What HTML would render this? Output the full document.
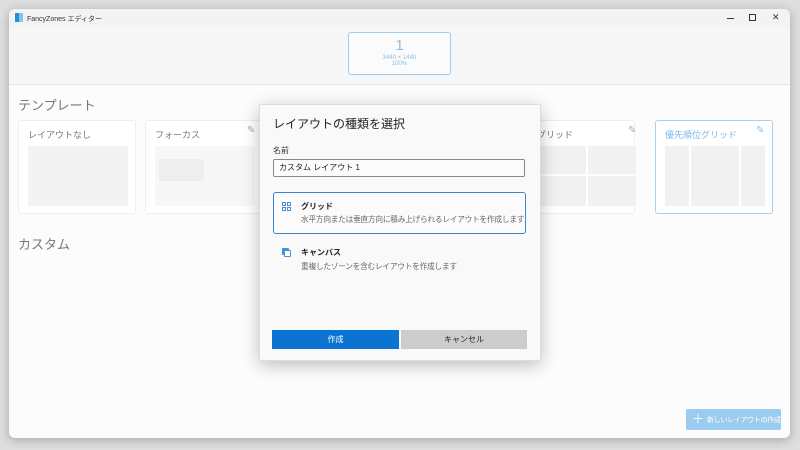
<!DOCTYPE html>
<html><head><meta charset="utf-8"><style>
*{box-sizing:border-box;margin:0;padding:0}
body{width:800px;height:450px;background:#dedede;position:relative;overflow:hidden;font-family:"Liberation Sans","Noto Sans CJK JP",sans-serif;}
.win{position:absolute;left:9px;top:9px;width:781px;height:429px;background:#fcfcfc;border-radius:6px;box-shadow:0 2px 10px rgba(0,0,0,.25);overflow:hidden}
.title{position:absolute;left:0;top:0;width:100%;height:18px;background:#f3f3f3;font-size:7px;color:#333}
.hdr{position:absolute;left:0;top:18px;width:100%;height:58px;background:#f7f7f7;border-bottom:1px solid #e8e8e8}
.mon{position:absolute;left:339px;top:5px;width:103px;height:43px;border:1.5px solid #9fcbef;border-radius:3px;background:#fbfbfb;text-align:center;color:#8cbfe9}
.abs{position:absolute;white-space:nowrap}
.card{position:absolute;top:111px;height:94px;background:#fff;border:1px solid #eee;border-radius:3px}
.ct{position:absolute;left:9px;top:7px;font-size:9px;color:#777}
.g{position:absolute;background:#f1f1f1}
.dlg{position:absolute;left:259px;top:104px;width:282px;height:257px;background:#f9f9f9;border:1px solid #ddd;box-shadow:0 4px 16px rgba(0,0,0,.25)}
.btn{position:absolute;top:225px;height:19px;font-size:8px;text-align:center;line-height:19px}
</style></head><body>
<div class="win">
 <div class="title">
  <div class="abs" style="left:6px;top:4px;width:4px;height:9px;background:#2a8fd9"></div>
  <div class="abs" style="left:10px;top:4px;width:4px;height:9px;background:#7cc6f0"></div>
  <div class="abs" style="left:18px;top:5px;">FancyZones エディター</div>
  <div class="abs" style="left:718px;top:9px;width:7px;height:1px;background:#333"></div>
  <div class="abs" style="left:740px;top:5px;width:7px;height:7px;border:1px solid #333"></div>
  <div class="abs" style="left:763px;top:3px;font-size:9px;">✕</div>
 </div>
 <div class="hdr">
  <div class="mon"><div style="font-size:15px;margin-top:4px">1</div><div style="font-size:6px;margin-top:1px">3440 × 1440</div><div style="font-size:6px">100%</div></div>
 </div>
 <div class="abs" style="left:9px;top:86px;font-size:13px;color:#777">テンプレート</div>
 <div class="card" style="left:9px;width:118px"><div class="ct">レイアウトなし</div><div class="g" style="left:9px;top:25px;width:100px;height:60px;background:#f3f3f3"></div></div>
 <div class="card" style="left:136px;width:118px"><div class="ct">フォーカス</div><div class="abs" style="left:101px;top:4px;font-size:10px;color:#aaa">✎</div><div class="g" style="left:9px;top:25px;width:100px;height:60px;background:#f7f7f7"></div><div class="g" style="left:13px;top:38px;width:45px;height:22px;background:#eee;border-radius:2px"></div></div>
 <div class="card" style="left:510px;width:116px"><div class="ct" style="left:17px">グリッド</div><div class="abs" style="left:108px;top:4px;font-size:10px;color:#aaa">✎</div>
  <div class="g" style="left:16px;top:25px;width:50px;height:28px"></div><div class="g" style="left:68px;top:25px;width:48px;height:28px"></div>
  <div class="g" style="left:16px;top:55px;width:50px;height:30px"></div><div class="g" style="left:68px;top:55px;width:48px;height:30px"></div></div>
 <div class="card" style="left:646px;width:118px;border:1.5px solid #a7d0f1"><div class="ct" style="color:#7ab8ea">優先順位グリッド</div><div class="abs" style="left:100px;top:4px;font-size:10px;color:#8cc0ea">✎</div>
  <div class="g" style="left:9px;top:25px;width:24px;height:60px"></div><div class="g" style="left:35px;top:25px;width:48px;height:60px"></div><div class="g" style="left:85px;top:25px;width:24px;height:60px"></div></div>
 <div class="abs" style="left:9px;top:225px;font-size:13px;color:#777">カスタム</div>
 <div class="abs" style="left:677px;top:400px;width:95px;height:21px;background:#9ccbf0;border-radius:2px;color:#fff;font-size:7px;line-height:21px;padding-left:6px;overflow:hidden;letter-spacing:-0.3px"><span style="font-size:12px;vertical-align:-1px">＋</span>&nbsp; 新しいレイアウトの作成</div>
</div>
<div class="dlg">
 <div class="abs" style="left:13px;top:10px;font-size:12px;color:#222">レイアウトの種類を選択</div>
 <div class="abs" style="left:13px;top:40px;font-size:8px;color:#333">名前</div>
 <div class="abs" style="left:13px;top:54px;width:252px;height:18px;border:1px solid #888;border-radius:2px;background:#fbfbfb;font-size:8px;line-height:16px;padding-left:5px;color:#222">カスタム レイアウト 1</div>
 <div class="abs" style="left:13px;top:87px;width:253px;height:42px;border:1.5px solid #3c86d1;border-radius:3px;background:#fbfbfb"></div>
 <div class="abs" style="left:22px;top:97px;width:9px;height:9px;display:grid;grid-template-columns:4px 4px;gap:1px"><i style="border:1px solid #4590d6"></i><i style="border:1px solid #4590d6"></i><i style="border:1px solid #4590d6"></i><i style="border:1px solid #4590d6"></i></div>
 <div class="abs" style="left:41px;top:96px;font-size:8px;font-weight:bold;color:#222">グリッド</div>
 <div class="abs" style="left:41px;top:109px;font-size:7.7px;color:#666;letter-spacing:-0.25px">水平方向または垂直方向に積み上げられるレイアウトを作成します</div>
 <div class="abs" style="left:22px;top:143px;width:7px;height:7px;background:#4590d6;border-radius:1px"></div>
 <div class="abs" style="left:24px;top:145px;width:7px;height:7px;background:#fff;border:1px solid #4590d6;border-radius:1px"></div>
 <div class="abs" style="left:41px;top:142px;font-size:8px;font-weight:bold;color:#222">キャンバス</div>
 <div class="abs" style="left:41px;top:156px;font-size:7.7px;color:#666;letter-spacing:-0.25px">重複したゾーンを含むレイアウトを作成します</div>
 <div class="btn" style="left:12px;width:127px;background:#0b74d3;color:#fff">作成</div>
 <div class="btn" style="left:141px;width:126px;background:#cccccc;color:#222">キャンセル</div>
</div>
</body></html>
